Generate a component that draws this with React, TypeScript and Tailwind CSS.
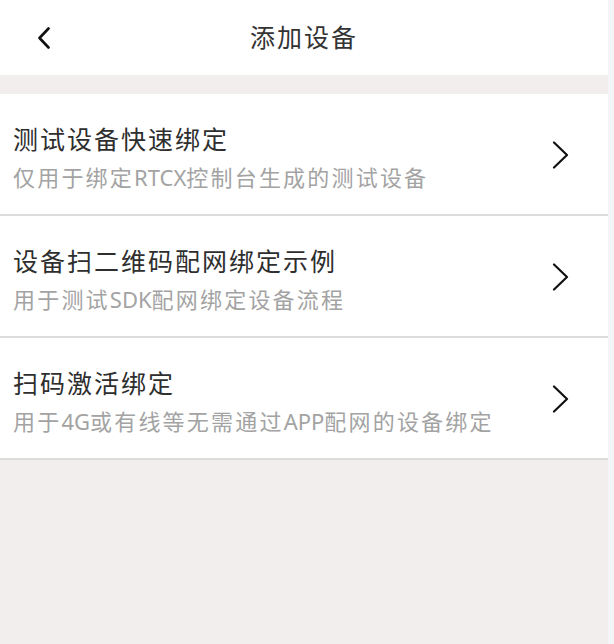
import React from 'react';

type BindOption = {
  title: string;
  desc: string;
};

const options: BindOption[] = [
  { title: '测试设备快速绑定', desc: '仅用于绑定RTCX控制台生成的测试设备' },
  { title: '设备扫二维码配网绑定示例', desc: '用于测试SDK配网绑定设备流程' },
  { title: '扫码激活绑定', desc: '用于4G或有线等无需通过APP配网的设备绑定' },
];

// latin runs keep normal spacing, CJK gets the wide tracking
function Spaced({ text }: { text: string }) {
  return (
    <>
      {text.split(/([A-Za-z0-9]+)/).map((part, i) =>
        /^[A-Za-z0-9]+$/.test(part) ? (
          <span key={i} className="tracking-normal">{part}</span>
        ) : (
          <span key={i}>{part}</span>
        )
      )}
    </>
  );
}

function ChevronLeft() {
  return (
    <svg width="14" height="22" viewBox="0 0 14 22" fill="none">
      <path d="M11.5 1.5 L2.5 11 L11.5 20.5" stroke="#111" strokeWidth="2.6" strokeLinecap="round" strokeLinejoin="round" />
    </svg>
  );
}

function ChevronRight() {
  return (
    <svg width="17" height="28" viewBox="0 0 17 28" fill="none">
      <path d="M2 1.5 L15 14 L2 26.5" stroke="#111" strokeWidth="2.2" strokeLinecap="round" strokeLinejoin="round" />
    </svg>
  );
}

export default function App() {
  return (
    <div className="flex w-[614px] h-[644px] font-['Noto_Sans','Noto_Sans_CJK_SC',sans-serif]">
      <div className="w-[608px] flex flex-col bg-[#f3eeee]">
        {/* Header */}
        <div className="h-[75px] bg-white flex items-center">
          <div className="w-[88px] pl-[37px] flex items-center">
            <ChevronLeft />
          </div>
          <div className="flex-1 text-center text-[25px] tracking-[2px] text-[#333]">添加设备</div>
          <div className="w-[88px]" />
        </div>

        <div className="h-[19px]" />

        {/* Options */}
        {options.map((opt) => (
          <div key={opt.title} className="h-[122px] bg-white border-b-2 border-[#dcdcdc] flex items-start pl-[13px]">
            <div className="pt-[27px]">
              <div className="text-[25px] leading-[36px] tracking-[2px] text-[#2e2e2e]">{opt.title}</div>
              <div className="text-[22px] leading-[40px] tracking-[2.2px] text-[#a3a3a3]">
                <Spaced text={opt.desc} />
              </div>
            </div>
            <div className="ml-auto mr-[39px] self-center mt-[2px]">
              <ChevronRight />
            </div>
          </div>
        ))}
      </div>
      <div className="flex-1 bg-[#f4f5f8]" />
    </div>
  );
}
